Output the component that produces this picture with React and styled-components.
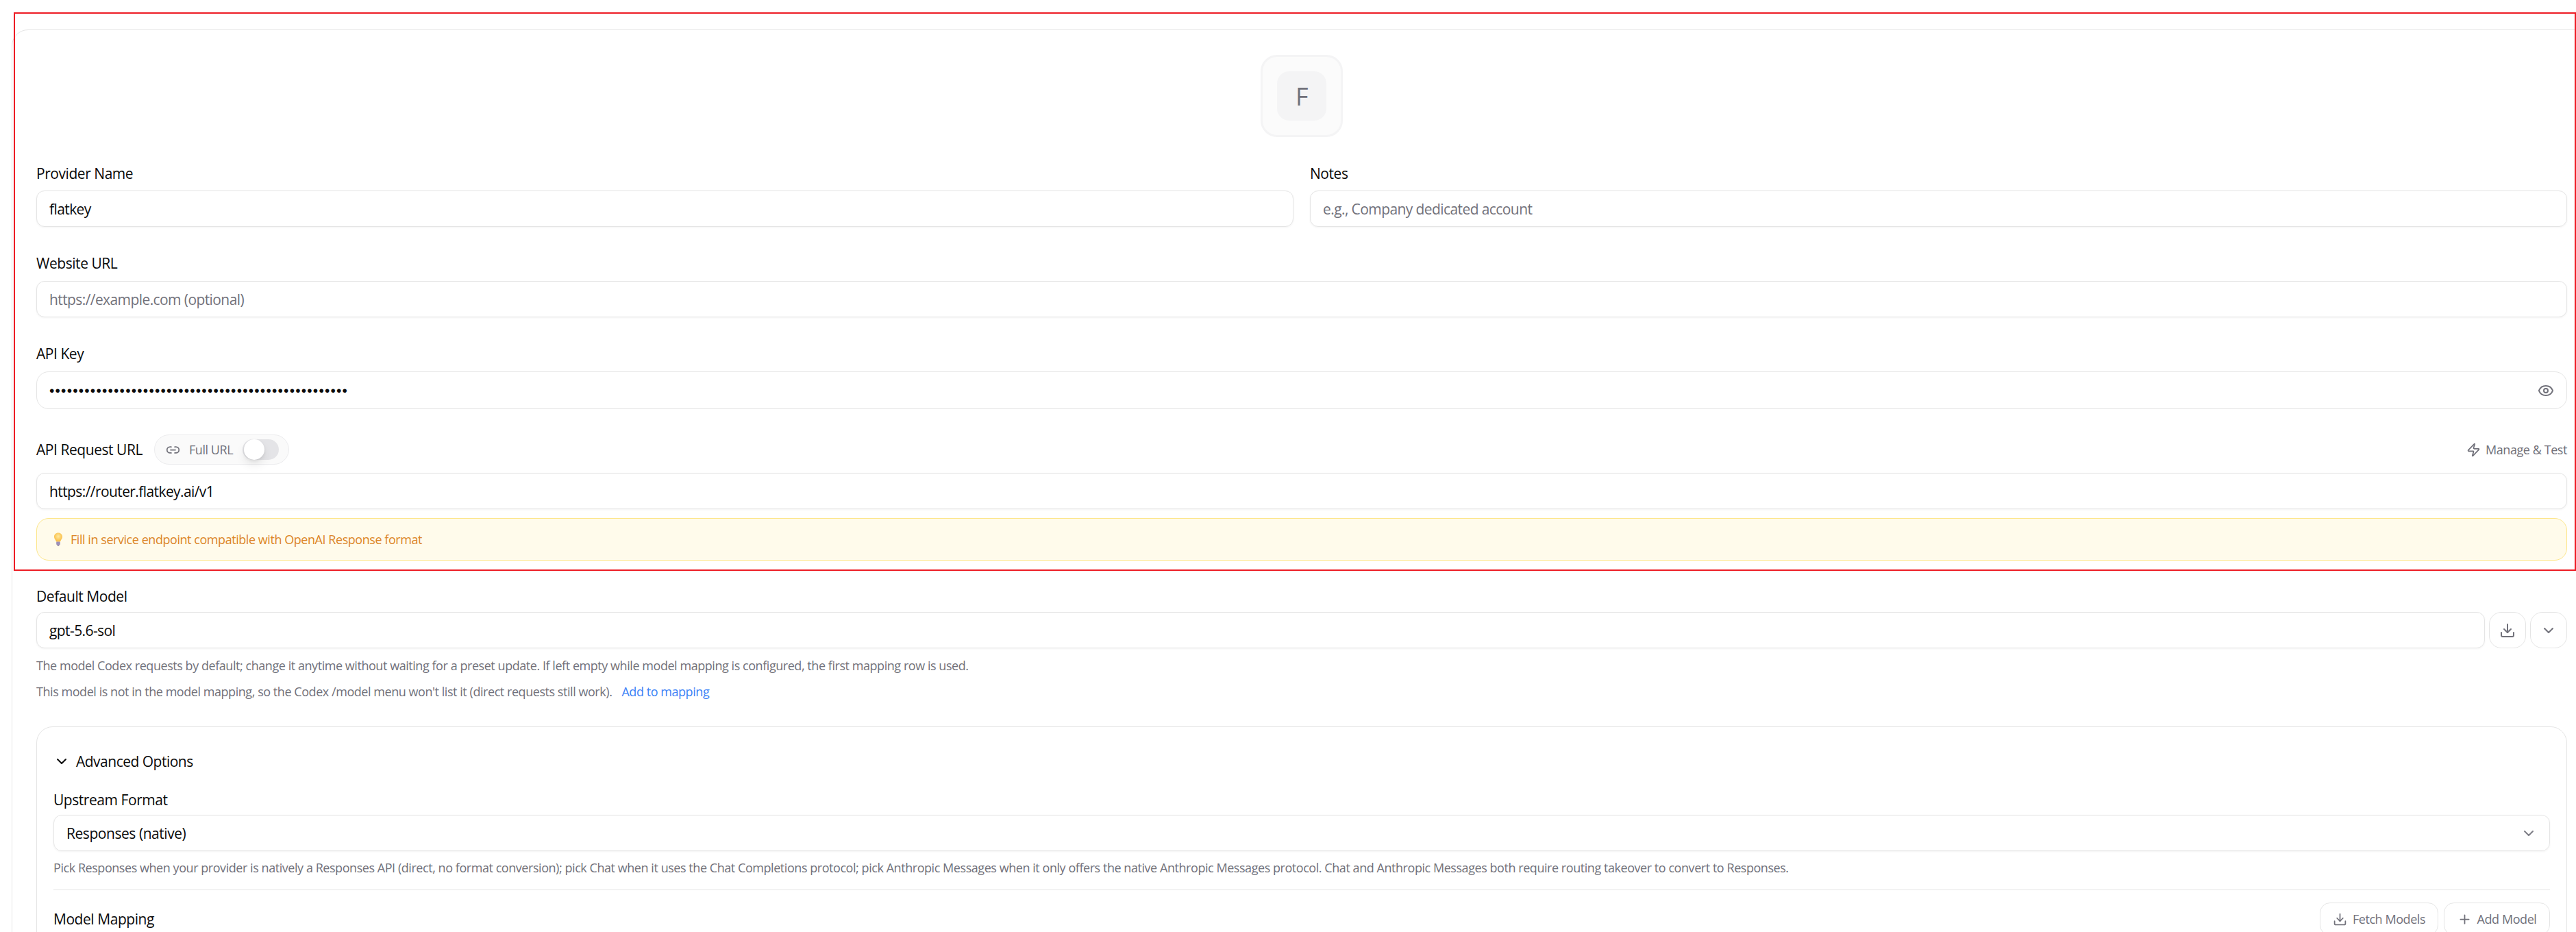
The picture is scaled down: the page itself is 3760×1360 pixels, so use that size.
import React from "react";
import styled, { createGlobalStyle } from "styled-components";
import { ChevronDown, Download, Eye, Link2, Plus, Zap } from "lucide-react";

const GlobalStyle = createGlobalStyle`
  html, body {
    margin: 0;
    padding: 0;
    background: #fff;
  }
  * {
    box-sizing: border-box;
  }
`;

const FONT = `"Open Sans", "Liberation Sans", sans-serif`;
const TRACKING = "-0.028em";

const Viewport = styled.div`
  position: relative;
  width: 3760px;
  height: 1360px;
  overflow: hidden;
  background: #fff;
  font-family: ${FONT};
  letter-spacing: ${TRACKING};
  color: #0a0a0a;
  padding: 43px 0 0 17px;
`;

const RedFrame = styled.div`
  position: absolute;
  top: 18px;
  left: 20px;
  right: 0;
  height: 815px;
  border: 2px solid #ed1c24;
  pointer-events: none;
`;

const Card = styled.div`
  width: 3766px;
  border: 1px solid #e5e5e5;
  border-radius: 24px;
  padding: 36px 35px 0;
`;

const AvatarRow = styled.div`
  display: flex;
  justify-content: center;
`;

const AvatarOuter = styled.div`
  width: 120px;
  height: 120px;
  border: 3px solid #f4f4f5;
  border-radius: 24px;
  background: #fbfbfb;
  display: flex;
  align-items: center;
  justify-content: center;
`;

const AvatarInner = styled.div`
  width: 72px;
  height: 72px;
  border-radius: 18px;
  background: #f4f4f5;
  color: #71717a;
  font-size: 36px;
  font-weight: 500;
  display: flex;
  align-items: center;
  justify-content: center;
`;

const TwoCols = styled.div`
  display: grid;
  grid-template-columns: 1fr 1fr;
  gap: 24px;
  width: 3694px;
`;

const Field = styled.div`
  width: ${(p) => (p.$half ? "auto" : "3694px")};
  margin-top: ${(p) => p.$top || 43}px;
`;

const Label = styled.label`
  display: block;
  font-size: 21px;
  line-height: 21px;
  font-weight: ${(p) => (p.$strong ? 500 : 400)};
  margin-bottom: ${(p) => p.$gap || 14}px;
`;

const InputBox = styled.input`
  display: block;
  width: 100%;
  height: ${(p) => (p.$tall ? 55 : 53)}px;
  padding: 1px 18px 0;
  border: 1px solid #e5e5e5;
  border-radius: ${(p) => (p.$tall ? 18 : 12)}px;
  background: #fff;
  box-shadow: ${(p) => (p.$tall ? "none" : "0 1px 3px rgba(0, 0, 0, 0.05)")};
  font-family: ${FONT};
  font-size: 21px;
  letter-spacing: ${TRACKING};
  color: #0a0a0a;
  outline: none;
  &::placeholder {
    color: #71717a;
    opacity: 1;
  }
`;

const SecretWrap = styled.div`
  position: relative;
`;

const SecretInput = styled(InputBox)`
  font-family: "Liberation Sans", sans-serif;
  letter-spacing: 1.2px;
  font-size: 21px;
`;

const EyeButton = styled.span`
  position: absolute;
  right: 19px;
  top: 16px;
  display: flex;
  color: #71717a;
`;

const UrlHeader = styled.div`
  display: flex;
  align-items: center;
  justify-content: space-between;
  height: 44px;
  margin: 37px 0 12px;
  width: 3694px;
`;

const UrlHeaderLeft = styled.div`
  display: flex;
  align-items: center;
  gap: 17px;
`;

const HeaderLabel = styled.span`
  font-size: 21px;
  line-height: 21px;
`;

const FullUrlPill = styled.div`
  display: flex;
  align-items: center;
  width: 197px;
  height: 44px;
  padding: 0 14px 0 16px;
  border: 1px solid #ececee;
  border-radius: 22px;
  background: #fafafa;
  color: #71717a;
`;

const PillText = styled.span`
  flex: 1;
  font-size: 18px;
  font-weight: 500;
  margin-left: 13px;
  white-space: nowrap;
`;

const Track = styled.div`
  position: relative;
  flex: none;
  width: 53px;
  height: 30px;
  border-radius: 15px;
  background: #e4e4e7;
`;

const Thumb = styled.div`
  position: absolute;
  left: 2px;
  top: 0;
  width: 30px;
  height: 30px;
  border-radius: 50%;
  background: #fff;
  box-shadow: 0 8px 14px rgba(0, 0, 0, 0.08), 0 2px 4px rgba(0, 0, 0, 0.08);
`;

const ManageLink = styled.a`
  display: flex;
  align-items: center;
  gap: 7px;
  font-size: 18px;
  letter-spacing: -0.024em;
  color: #71717a;
`;

const Note = styled.div`
  display: flex;
  align-items: center;
  gap: 11px;
  width: 3694px;
  height: 62px;
  margin-top: 13px;
  padding-left: 24px;
  background: #fffbeb;
  border: 1px solid #fde68a;
  border-radius: 18px;
  font-size: 18px;
  color: #dc8526;
`;

const ModelRow = styled.div`
  display: flex;
  gap: 6px;
`;

const IconButton = styled.button`
  flex: none;
  width: 54px;
  height: 53px;
  border: 1px solid #e5e5e5;
  border-radius: 18px;
  background: #fff;
  color: #71717a;
  display: flex;
  align-items: center;
  justify-content: center;
  padding: 0;
`;

const Help = styled.p`
  margin: ${(p) => p.$top}px 0 0;
  font-size: 18px;
  line-height: 27px;
  color: #71717a;
  white-space: nowrap;
`;

const AddLink = styled.a`
  margin-left: 14px;
  color: #3b82f6;
  font-weight: 500;
`;

const AdvancedCard = styled.div`
  width: 3694px;
  margin-top: 37px;
  border: 1px solid #e5e5e5;
  border-radius: 24px;
  padding: 34px 24px 40px;
`;

const AdvancedTitle = styled.div`
  display: flex;
  align-items: center;
  gap: 9px;
  height: 32px;
  font-size: 21px;
  font-weight: 500;
  letter-spacing: -0.024em;
`;

const SelectBox = styled.div`
  display: flex;
  align-items: center;
  justify-content: space-between;
  width: 3644px;
  height: 53px;
  padding: 1px 18px 0;
  border: 1px solid #e5e5e5;
  border-radius: 12px;
  box-shadow: 0 1px 3px rgba(0, 0, 0, 0.05);
  font-size: 21px;
  svg {
    color: #71717a;
    opacity: 0.9;
  }
`;

const Divider = styled.div`
  width: 3644px;
  height: 1px;
  margin-top: 18px;
  background: #e5e5e5;
`;

const MappingRow = styled.div`
  display: flex;
  align-items: center;
  justify-content: space-between;
  width: 3644px;
  margin-top: 18px;
`;

const MappingLabel = styled.span`
  font-size: 21px;
`;

const MappingActions = styled.div`
  display: flex;
  gap: 8px;
`;

const ActionButton = styled.button`
  display: flex;
  align-items: center;
  justify-content: center;
  gap: 8px;
  width: ${(p) => p.$width}px;
  height: 48px;
  padding: 0;
  border: 1px solid #e5e5e5;
  border-radius: 15px;
  background: #fff;
  color: #71717a;
  font-family: ${FONT};
  font-size: 18px;
  font-weight: 500;
  letter-spacing: -0.024em;
`;

const UrlField = styled.div`
  width: 3694px;
`;

const BulbIcon = () => (
  <svg width="14" height="20" viewBox="0 0 14 20">
    <defs>
      <radialGradient id="bulb" cx="50%" cy="40%" r="60%">
        <stop offset="0%" stopColor="#ffe9a0" />
        <stop offset="100%" stopColor="#f9b93c" />
      </radialGradient>
    </defs>
    <path
      d="M7 .5C3.4.5 1 3 1 6.2c0 2.6 1.7 3.9 2.6 6 .2.5.4 1 .4 1.3h6c0-.4.2-.8.4-1.3.9-2.1 2.6-3.4 2.6-6C13 3 10.6.5 7 .5z"
      fill="url(#bulb)"
    />
    <rect x="4.2" y="13.5" width="5.6" height="4.6" rx="1" fill="#9d90b8" />
    <rect x="5.4" y="18" width="3.2" height="1.4" rx=".7" fill="#7d7196" />
  </svg>
);

export default function App() {
  return (
    <>
      <GlobalStyle />
      <Viewport>
        <Card>
          <AvatarRow>
            <AvatarOuter>
              <AvatarInner>F</AvatarInner>
            </AvatarOuter>
          </AvatarRow>

          <TwoCols>
            <Field $half>
              <Label>Provider Name</Label>
              <InputBox readOnly value="flatkey" />
            </Field>
            <Field $half>
              <Label>Notes</Label>
              <InputBox readOnly placeholder="e.g., Company dedicated account" />
            </Field>
          </TwoCols>

          <Field>
            <Label $gap={15}>Website URL</Label>
            <InputBox readOnly placeholder="https://example.com (optional)" />
          </Field>

          <Field>
            <Label $strong $gap={15}>API Key</Label>
            <SecretWrap>
              <SecretInput $tall readOnly type="password" value={"x".repeat(51)} />
              <EyeButton>
                <Eye size={24} strokeWidth={2} />
              </EyeButton>
            </SecretWrap>
          </Field>

          <UrlHeader>
            <UrlHeaderLeft>
              <HeaderLabel>API Request URL</HeaderLabel>
              <FullUrlPill>
                <Link2 size={21} />
                <PillText>Full URL</PillText>
                <Track>
                  <Thumb />
                </Track>
              </FullUrlPill>
            </UrlHeaderLeft>
            <ManageLink>
              <Zap size={21} />
              Manage &amp; Test
            </ManageLink>
          </UrlHeader>

          <UrlField>
            <InputBox readOnly value="https://router.flatkey.ai/v1" />
          </UrlField>

          <Note>
            <BulbIcon />
            Fill in service endpoint compatible with OpenAI Response format
          </Note>

          <Field $top={42}>
            <Label $gap={12}>Default Model</Label>
            <ModelRow>
              <InputBox readOnly value="gpt-5.6-sol" />
              <IconButton>
                <Download size={24} />
              </IconButton>
              <IconButton>
                <ChevronDown size={24} />
              </IconButton>
            </ModelRow>
            <Help $top={12}>
              The model Codex requests by default; change it anytime without waiting for a preset
              update. If left empty while model mapping is configured, the first mapping row is used.
            </Help>
            <Help $top={11}>
              This model is not in the model mapping, so the Codex /model menu won't list it (direct
              requests still work).
              <AddLink>Add to mapping</AddLink>
            </Help>
          </Field>

          <AdvancedCard>
            <AdvancedTitle>
              <ChevronDown size={24} />
              Advanced Options
            </AdvancedTitle>
            <Field $top={30}>
              <Label $gap={11}>Upstream Format</Label>
              <SelectBox>
                Responses (native)
                <ChevronDown size={24} />
              </SelectBox>
              <Help $top={11}>
                Pick Responses when your provider is natively a Responses API (direct, no format
                conversion); pick Chat when it uses the Chat Completions protocol; pick Anthropic
                Messages when it only offers the native Anthropic Messages protocol. Chat and
                Anthropic Messages both require routing takeover to convert to Responses.
              </Help>
              <Divider />
              <MappingRow>
                <MappingLabel>Model Mapping</MappingLabel>
                <MappingActions>
                  <ActionButton $width={173}>
                    <Download size={21} />
                    Fetch Models
                  </ActionButton>
                  <ActionButton $width={155}>
                    <Plus size={21} />
                    Add Model
                  </ActionButton>
                </MappingActions>
              </MappingRow>
            </Field>
          </AdvancedCard>
        </Card>
        <RedFrame />
      </Viewport>
    </>
  );
}
